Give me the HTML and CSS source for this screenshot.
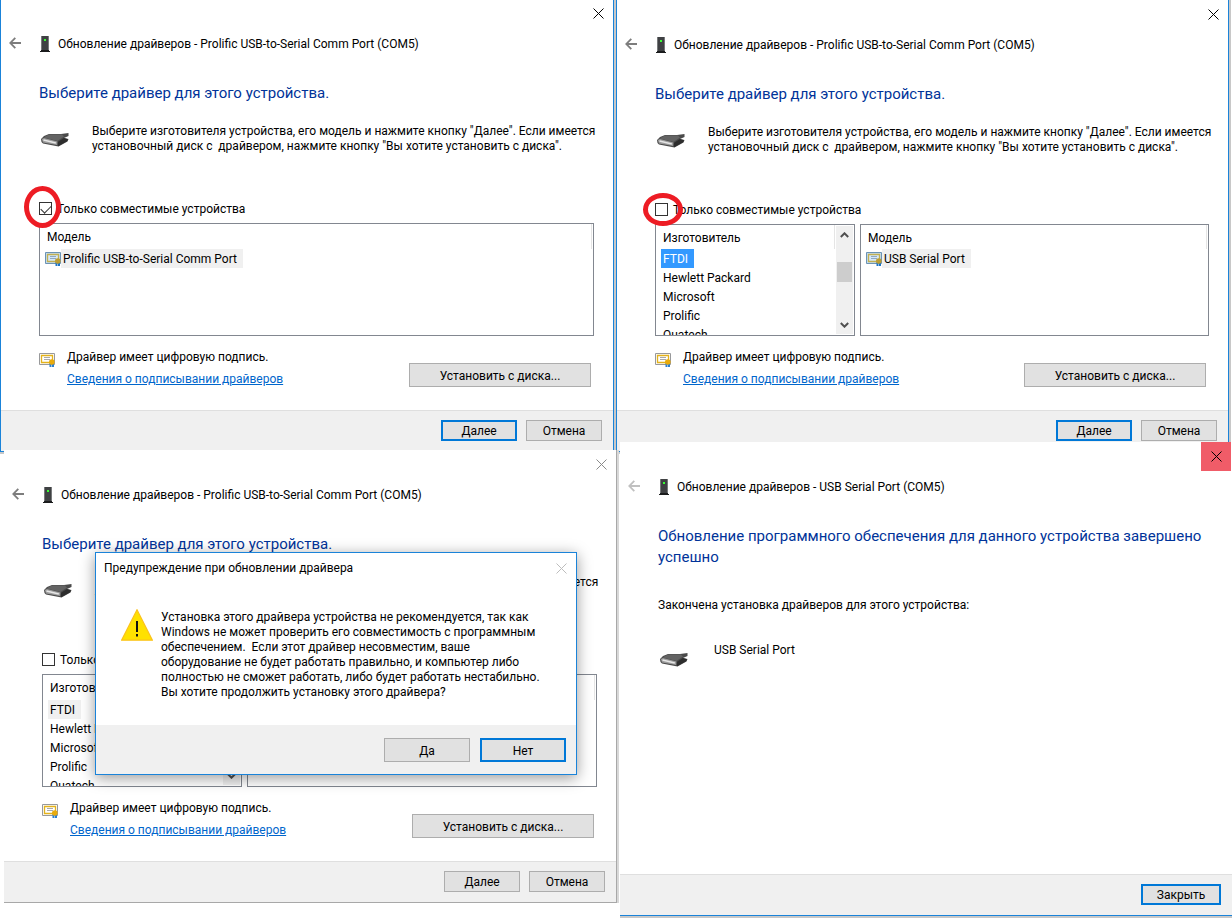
FILE: index.html
```
<!DOCTYPE html>
<html lang="ru">
  <head>
    <meta charset="UTF-8" />
    <meta name="viewport" content="width=device-width, initial-scale=1.0" />
    <title>Обновление драйверов</title>
    <link rel="stylesheet" href="styles.css">
  </head>
  <body>
    <!-- Общие иконки -->
    <svg class="sprite" width="0" height="0" aria-hidden="true">
      <symbol id="i-close" viewBox="0 0 11 11">
        <path d="M0.5 0.5L10.5 10.5M10.5 0.5L0.5 10.5" fill="none" stroke="currentColor" stroke-width="1" />
      </symbol>
      <symbol id="i-back" viewBox="0 0 12 12">
        <path d="M6.3 0.8L1.3 6L6.3 11.2M1.3 6H12" fill="none" stroke="currentColor" stroke-width="1.8" />
      </symbol>
      <symbol id="i-tower" viewBox="0 0 10 16">
        <path d="M1 0h8v14h-8z" fill="#3f4143" />
        <path d="M1 0h1v14h-1zM8 0h1v14h-1z" fill="#77797b" />
        <path d="M1 14h8v1h-8zM0 15h10v1h-10z" fill="#1b1c1d" />
        <path d="M4 3h2v2h-2z" fill="#39ff35" />
      </symbol>
      <symbol id="i-plug" viewBox="0 0 28 15">
        <path d="M0 7L3 4L8 2L20 2L27.5 1V4L23 6L27.5 7L26.5 9.5L17.5 14.5L2 11.5L0.5 10z" fill="#4a4a4a" />
        <path d="M2.5 5.5L8 2.5L21 2.5L23 4.5L16.5 9z" fill="#636363" />
        <path d="M0.8 7L3 6L16.5 9.5L16.2 13L2 10.5z" fill="#9c9c9c" />
        <path d="M2.5 8L14.8 11" stroke="#e6e6e6" stroke-width="1.6" />
        <path d="M16.8 10L23 6L27 7.2L26 9.3L17 14.2z" fill="#2d2d2d" />
      </symbol>
      <symbol id="i-cert" viewBox="0 0 17 15">
        <path d="M0.5 1.5h15v11h-15z" fill="#fdfdfd" stroke="#98999b" />
        <path d="M2.5 3.5h11v7h-11z" fill="#fff" stroke="#e3b21c" stroke-width="1.3" />
        <path d="M5 5.5h6M5 7.5h6" stroke="#a9a9a9" />
        <path d="M10.5 11h2v4h-2zM13 11h2v4h-2z" fill="#2b7fd0" />
        <circle cx="12.8" cy="10" r="2.8" fill="#e9ab0c" />
      </symbol>
      <symbol id="i-cert-sel" viewBox="0 0 17 15">
        <path d="M0.5 1.5h15v11h-15z" fill="#c5ddf2" stroke="#6b93b5" />
        <path d="M2.5 3.5h11v7h-11z" fill="#d6e8f8" stroke="#c2b052" stroke-width="1.3" />
        <path d="M5 5.5h6M5 7.5h6" stroke="#8fa9c1" />
        <path d="M10.5 11h2v4h-2zM13 11h2v4h-2z" fill="#1c74c6" />
        <circle cx="12.8" cy="10" r="2.8" fill="#bb9d35" />
      </symbol>
      <symbol id="i-up" viewBox="0 0 9 6">
        <path d="M0.8 5L4.5 1.3L8.2 5" fill="none" stroke="#505050" stroke-width="2" />
      </symbol>
      <symbol id="i-down" viewBox="0 0 9 6">
        <path d="M0.8 1L4.5 4.7L8.2 1" fill="none" stroke="#505050" stroke-width="2" />
      </symbol>
    </svg>

    <main class="desktop">
      <div class="column">
        <section class="window first">
          <button class="close" type="button" aria-label="Закрыть окно"><svg width="11" height="11"><use href="#i-close" /></svg></button>
          <header class="nav">
            <button class="back" type="button" aria-label="Назад"><svg width="12" height="12"><use href="#i-back" /></svg></button>
            <svg class="tower" width="10" height="16"><use href="#i-tower" /></svg>
            <span>Обновление драйверов - Prolific USB-to-Serial Comm Port (COM5)</span>
          </header>
          <div class="content">
            <h2>Выберите драйвер для этого устройства.</h2>
            <div class="intro">
              <svg width="28" height="15"><use href="#i-plug" /></svg>
              <p>Выберите изготовителя устройства, его модель и нажмите кнопку "Далее". Если имеется<br>установочный диск с&nbsp; драйвером, нажмите кнопку "Вы хотите установить с диска".</p>
            </div>
            <div class="compatible">
              <input type="checkbox" id="compat-1" checked />
              <label for="compat-1">Только совместимые устройства</label>
              <span class="mark tall"></span>
            </div>
            <div class="lists">
              <div class="list models">
                <table>
                  <thead><tr><th>Модель</th></tr></thead>
                  <tbody>
                    <tr><td><svg width="17" height="15"><use href="#i-cert-sel" /></svg><span class="picked">Prolific USB-to-Serial Comm Port</span></td></tr>
                  </tbody>
                </table>
              </div>
            </div>
            <div class="signature">
              <svg width="17" height="15"><use href="#i-cert" /></svg>
              <div class="sign-text">
                <p>Драйвер имеет цифровую подпись.</p>
                <a href="#">Сведения о подписывании драйверов</a>
              </div>
              <button class="btn disk" type="button">Установить с диска...</button>
            </div>
          </div>
          <footer>
            <button class="btn default" type="button">Далее</button>
            <button class="btn" type="button">Отмена</button>
          </footer>
        </section>

        <section class="window inactive">
          <button class="close" type="button" aria-label="Закрыть окно"><svg width="11" height="11"><use href="#i-close" /></svg></button>
          <header class="nav">
            <button class="back" type="button" aria-label="Назад"><svg width="12" height="12"><use href="#i-back" /></svg></button>
            <svg class="tower" width="10" height="16"><use href="#i-tower" /></svg>
            <span>Обновление драйверов - Prolific USB-to-Serial Comm Port (COM5)</span>
          </header>
          <div class="content">
            <h2>Выберите драйвер для этого устройства.</h2>
            <div class="intro">
              <svg width="28" height="15"><use href="#i-plug" /></svg>
              <p>Выберите изготовителя устройства, его модель и нажмите кнопку "Далее". Если имеется<br>установочный диск с&nbsp; драйвером, нажмите кнопку "Вы хотите установить с диска".</p>
            </div>
            <div class="compatible">
              <input type="checkbox" id="compat-3" />
              <label for="compat-3">Только совместимые устройства</label>
            </div>
            <div class="lists">
              <div class="list makers">
                <table>
                  <thead><tr><th>Изготовитель</th></tr></thead>
                  <tbody>
                    <tr><td><span class="picked">FTDI</span></td></tr>
                    <tr><td><span>Hewlett Packard</span></td></tr>
                    <tr><td><span>Microsoft</span></td></tr>
                    <tr><td><span>Prolific</span></td></tr>
                    <tr><td><span>Quatech</span></td></tr>
                  </tbody>
                </table>
                <div class="scroll">
                  <svg width="9" height="6"><use href="#i-up" /></svg>
                  <span class="thumb"></span>
                  <svg width="9" height="6"><use href="#i-down" /></svg>
                </div>
              </div>
              <div class="list models">
                <table>
                  <thead><tr><th>Модель</th></tr></thead>
                  <tbody>
                    <tr><td><svg width="17" height="15"><use href="#i-cert-sel" /></svg><span class="picked">USB Serial Port</span></td></tr>
                  </tbody>
                </table>
              </div>
            </div>
            <div class="signature">
              <svg width="17" height="15"><use href="#i-cert" /></svg>
              <div class="sign-text">
                <p>Драйвер имеет цифровую подпись.</p>
                <a href="#">Сведения о подписывании драйверов</a>
              </div>
              <button class="btn disk" type="button">Установить с диска...</button>
            </div>
          </div>
          <footer>
            <button class="btn" type="button">Далее</button>
            <button class="btn" type="button">Отмена</button>
          </footer>

          <div class="dialog" role="alertdialog" aria-labelledby="warn-title">
            <div class="dialog-title">
              <span id="warn-title">Предупреждение при обновлении драйвера</span>
              <button class="close" type="button" aria-label="Закрыть предупреждение"><svg width="11" height="11"><use href="#i-close" /></svg></button>
            </div>
            <div class="dialog-body">
              <svg width="32" height="32" viewBox="0 0 32 32">
                <path d="M16 0.8L31.4 31.2H0.6z" fill="#ffe100" stroke="#fbc21c" stroke-width="1.2" />
                <path d="M15 12h2v11h-2zM15 25h2v2.4h-2z" fill="#111" />
              </svg>
              <p>Установка этого драйвера устройства не рекомендуется, так как<br>Windows не может проверить его совместимость с программным<br>обеспечением.&nbsp; Если этот драйвер несовместим, ваше<br>оборудование не будет работать правильно, и компьютер либо<br>полностью не сможет работать, либо будет работать нестабильно.<br>Вы хотите продолжить установку этого драйвера?</p>
            </div>
            <div class="dialog-buttons">
              <button class="btn" type="button">Да</button>
              <button class="btn default" type="button">Нет</button>
            </div>
          </div>
        </section>
      </div>

      <div class="column">
        <section class="window second">
          <button class="close" type="button" aria-label="Закрыть окно"><svg width="11" height="11"><use href="#i-close" /></svg></button>
          <header class="nav">
            <button class="back" type="button" aria-label="Назад"><svg width="12" height="12"><use href="#i-back" /></svg></button>
            <svg class="tower" width="10" height="16"><use href="#i-tower" /></svg>
            <span>Обновление драйверов - Prolific USB-to-Serial Comm Port (COM5)</span>
          </header>
          <div class="content">
            <h2>Выберите драйвер для этого устройства.</h2>
            <div class="intro">
              <svg width="28" height="15"><use href="#i-plug" /></svg>
              <p>Выберите изготовителя устройства, его модель и нажмите кнопку "Далее". Если имеется<br>установочный диск с&nbsp; драйвером, нажмите кнопку "Вы хотите установить с диска".</p>
            </div>
            <div class="compatible">
              <input type="checkbox" id="compat-2" />
              <label for="compat-2">Только совместимые устройства</label>
              <span class="mark wide"></span>
            </div>
            <div class="lists">
              <div class="list makers">
                <table>
                  <thead><tr><th>Изготовитель</th></tr></thead>
                  <tbody>
                    <tr><td><span class="picked focused">FTDI</span></td></tr>
                    <tr><td><span>Hewlett Packard</span></td></tr>
                    <tr><td><span>Microsoft</span></td></tr>
                    <tr><td><span>Prolific</span></td></tr>
                    <tr><td><span>Quatech</span></td></tr>
                  </tbody>
                </table>
                <div class="scroll">
                  <svg width="9" height="6"><use href="#i-up" /></svg>
                  <span class="thumb"></span>
                  <svg width="9" height="6"><use href="#i-down" /></svg>
                </div>
              </div>
              <div class="list models">
                <table>
                  <thead><tr><th>Модель</th></tr></thead>
                  <tbody>
                    <tr><td><svg width="17" height="15"><use href="#i-cert-sel" /></svg><span class="picked">USB Serial Port</span></td></tr>
                  </tbody>
                </table>
              </div>
            </div>
            <div class="signature">
              <svg width="17" height="15"><use href="#i-cert" /></svg>
              <div class="sign-text">
                <p>Драйвер имеет цифровую подпись.</p>
                <a href="#">Сведения о подписывании драйверов</a>
              </div>
              <button class="btn disk" type="button">Установить с диска...</button>
            </div>
          </div>
          <footer>
            <button class="btn default" type="button">Далее</button>
            <button class="btn" type="button">Отмена</button>
          </footer>
        </section>

        <section class="window done">
          <button class="close" type="button" aria-label="Закрыть окно"><svg width="11" height="11"><use href="#i-close" /></svg></button>
          <header class="nav">
            <button class="back" type="button" aria-label="Назад" disabled><svg width="12" height="12"><use href="#i-back" /></svg></button>
            <svg class="tower" width="10" height="16"><use href="#i-tower" /></svg>
            <span>Обновление драйверов - USB Serial Port (COM5)</span>
          </header>
          <div class="content">
            <h2>Обновление программного обеспечения для данного устройства завершено успешно</h2>
            <p class="finished">Закончена установка драйверов для этого устройства:</p>
            <div class="device">
              <svg width="28" height="15"><use href="#i-plug" /></svg>
              <p>USB Serial Port</p>
            </div>
          </div>
          <footer>
            <button class="btn default" type="button">Закрыть</button>
          </footer>
        </section>
      </div>
    </main>
  </body>
</html>
```
FILE: styles.css
```
* {
  box-sizing: border-box;
}

body {
  margin: 0;
  background: #fff;
  color: #000;
  font: 12px/16px Roboto, "Open Sans", sans-serif;
}

p,
h2 {
  margin: 0;
}

button {
  font: inherit;
  color: inherit;
}

svg {
  display: block;
  flex: none;
}

.sprite {
  position: absolute;
}

.desktop {
  display: grid;
  grid-template-columns: minmax(0, 1fr) minmax(0, 1fr);
  min-height: 100vh;
  overflow: hidden;
}

.column {
  display: flex;
  flex-direction: column;
}

/* left column overlaps the right one */
.column:first-child {
  position: relative;
  z-index: 1;
}

/* windows */
.window {
  position: relative;
  display: flex;
  flex-direction: column;
  padding-top: 1px;
  background: #fff;
}

.first,
.second {
  border: 1px solid #1a83d9;
  border-top: 0;
  box-shadow: 0 0 0 2px #c8c8c8;
}

.first {
  margin-right: 2px;
  padding-top: 0;
}

.second {
  margin-right: 3px;
}

.inactive {
  margin: -2px -1px 0 4px;
  border: 1px solid #a8a8a8;
  border-width: 0 1px 1px 0;
  box-shadow: 2px 0 0 #d8d8d8;
}

.done {
  flex: 1;
  margin: -10px 0 2px 4px;
  border-bottom: 1px solid #1a83d9;
  box-shadow: 0 2px 0 #c8c8c8;
}

.close {
  display: flex;
  align-items: center;
  justify-content: center;
  align-self: flex-end;
  width: 30px;
  height: 27px;
  padding: 0;
  border: 0;
  background: none;
}

.inactive .close {
  color: #8a8a8a;
}

.done .close {
  height: 29px;
  margin: -1px 1px -1px 0;
  background: #f05c68;
}

.nav {
  display: flex;
  align-items: center;
  height: 33px;
  padding-left: 8px;
}

.nav span {
  padding-top: 1px;
}

.back {
  padding: 0 0 2px;
  border: 0;
  background: none;
  color: #7d7d7d;
}

.back:disabled {
  color: #c0c0c0;
}

.tower {
  margin: 0 8px 0 19px;
}

.content {
  flex: 1;
  padding: 23px 19px 23px 38px;
}

h2 {
  color: #003399;
  font-size: 15px;
  font-weight: normal;
  line-height: 21px;
}

.intro {
  display: flex;
  align-items: flex-end;
  gap: 23px;
  margin: 20px 0 46px;
  padding-left: 2px;
  line-height: 15px;
  white-space: nowrap;
}

.intro svg {
  margin-bottom: 7px;
}

.compatible {
  position: relative;
  display: flex;
  align-items: center;
  gap: 5px;
  height: 16px;
}

label {
  padding-top: 1px;
}

input[type="checkbox"] {
  appearance: none;
  width: 13px;
  height: 13px;
  margin: 0;
  border: 1px solid #333;
  background: #fff;
}

input[type="checkbox"]:checked::before {
  content: "";
  display: block;
  width: 9px;
  height: 5px;
  margin: 2px 1px;
  border: solid #333;
  border-width: 0 0 1px 1px;
  transform: rotate(-45deg);
}

/* red marker rings round the check boxes */
.mark {
  position: absolute;
  border: 5px solid #ed1c24;
  border-radius: 50%;
}

.tall {
  left: -15px;
  top: -14px;
  width: 37px;
  height: 42px;
}

.wide {
  left: -12px;
  top: -8px;
  width: 40px;
  height: 33px;
}

/* lists */
.lists {
  display: flex;
  gap: 5px;
  margin-top: 7px;
}

.list {
  display: flex;
  height: 113px;
  border: 1px solid #828790;
  overflow: hidden;
}

.second .list {
  height: 112px;
}

.makers {
  flex: 0 0 200px;
}

.models {
  flex: 1;
  padding-right: 1px;
}

table {
  flex: 1;
  height: min-content;
  border-collapse: collapse;
}

th {
  height: 25px;
  padding: 1px 7px 0;
  border-right: 1px solid #e5e5e5;
  font-weight: normal;
  text-align: left;
}

.second th {
  height: 24px;
}

td {
  display: flex;
  align-items: center;
  height: 19px;
  padding: 0 0 0 5px;
}

td span {
  padding: 2px 6px 1px 2px;
}

td svg {
  margin-right: -1px;
}

.picked {
  background: #f0f0f0;
}

.focused {
  background: #3399ff;
  color: #fff;
}

.scroll {
  display: flex;
  flex-direction: column;
  align-items: center;
  justify-content: space-between;
  width: 17px;
  margin: 1px;
  padding: 6px 0;
  background: #f0f0f0;
}

.thumb {
  width: 15px;
  height: 20px;
  margin-bottom: 16px;
  background: #cdcdcd;
}

.signature {
  display: flex;
  align-items: flex-start;
  margin-top: 13px;
  padding-right: 3px;
}

.signature svg {
  margin-top: 3px;
}

.sign-text {
  display: flex;
  flex-direction: column;
  gap: 6px;
  margin-left: 11px;
}

a {
  color: #0066cc;
}

/* buttons */
.btn {
  width: 76px;
  height: 21px;
  padding: 1px 0 0;
  border: 1px solid #adadad;
  background: #e1e1e1;
}

.default {
  border: 2px solid #0078d7;
}

.disk {
  align-self: flex-end;
  width: 182px;
  height: 24px;
  margin-left: auto;
}

footer {
  display: flex;
  justify-content: flex-end;
  gap: 9px;
  padding: 9px 11px 10px;
  border-top: 1px solid #dfdfdf;
  background: #f0f0f0;
}

.done .btn {
  width: 80px;
}

/* warning dialog */
.dialog {
  position: absolute;
  left: 91px;
  top: 102px;
  width: 482px;
  border: 1px solid #1a83d9;
  background: #fff;
  box-shadow: 0 3px 14px rgba(0, 0, 0, 0.4);
}

.dialog-title {
  display: flex;
  align-items: center;
  justify-content: space-between;
  height: 29px;
  padding-left: 8px;
}

.dialog .close {
  color: #bdbdbd;
}

.dialog-body {
  display: flex;
  gap: 8px;
  padding: 27px 25px 25px;
  line-height: 15px;
  white-space: nowrap;
}

.dialog-body p {
  padding-top: 1px;
}

.dialog-buttons {
  display: flex;
  justify-content: flex-end;
  gap: 10px;
  padding: 13px 10px 12px;
  background: #f0f0f0;
}

.dialog .btn {
  width: 86px;
  height: 24px;
}

/* finished page */
.finished {
  margin-top: 29px;
}

.device {
  display: flex;
  gap: 26px;
  margin-top: 29px;
  padding-left: 2px;
}

.device svg {
  margin-top: 10px;
}

.done .content {
  padding-right: 11px;
}
```
